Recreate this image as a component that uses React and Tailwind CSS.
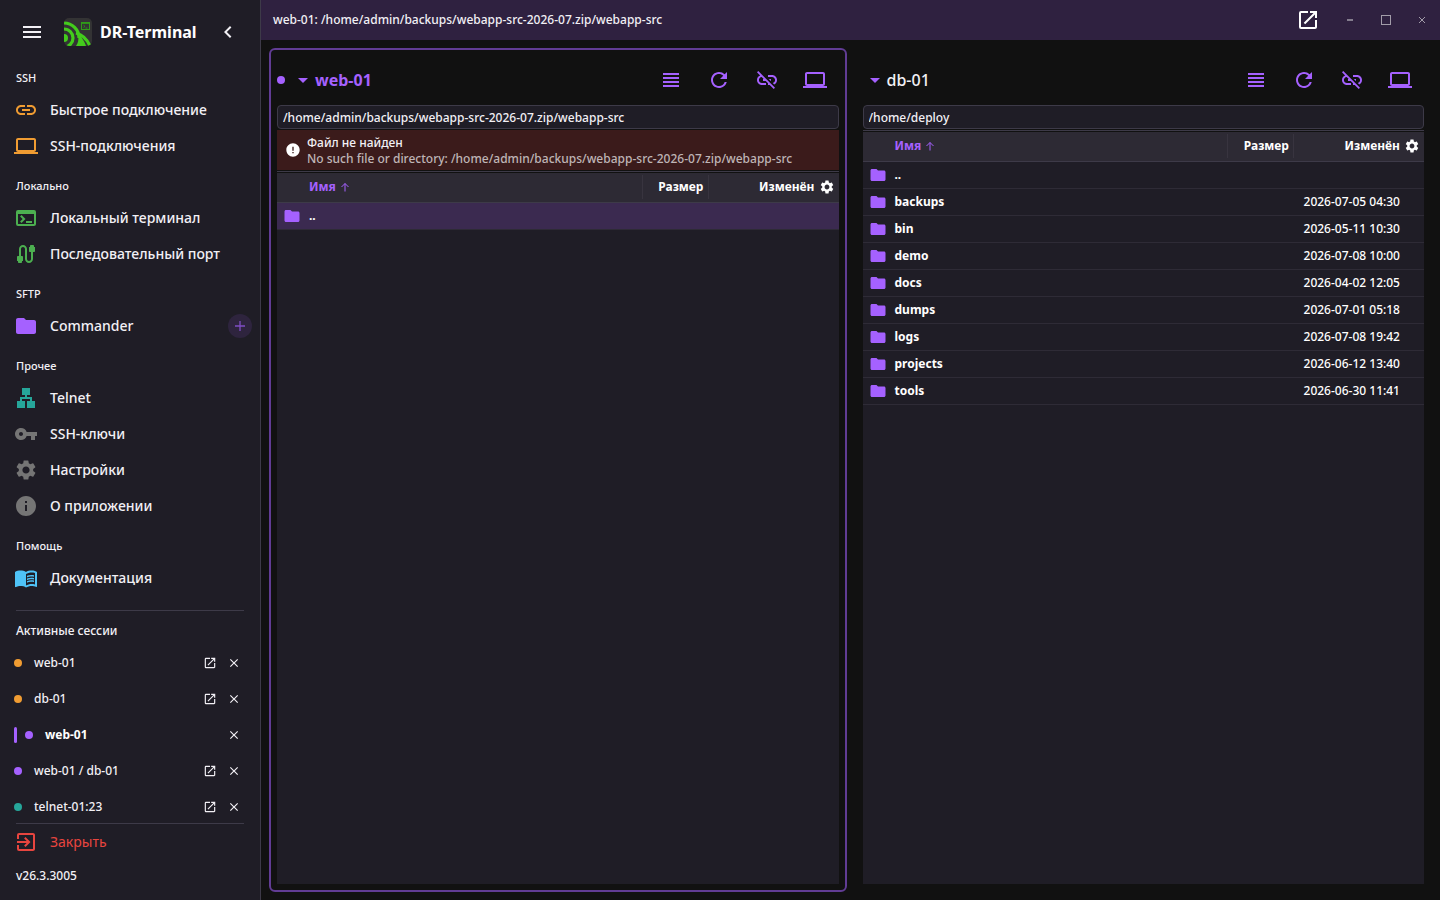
import {
  MdArrowDropDown,
  MdCable,
  MdChevronLeft,
  MdClose,
  MdComputer,
  MdError,
  MdExitToApp,
  MdFolder,
  MdInfo,
  MdLan,
  MdLink,
  MdLinkOff,
  MdMenu,
  MdMenuBook,
  MdOpenInNew,
  MdRefresh,
  MdSettings,
  MdTerminal,
  MdViewHeadline,
  MdVpnKey,
} from "react-icons/md";

const ARCHIVE_PATH = "/home/admin/backups/webapp-src-2026-07.zip/webapp-src";

const groups = [
  {
    title: "SSH",
    items: [
      { label: "Быстрое подключение", icon: MdLink, color: "text-[#f09c32]" },
      { label: "SSH-подключения", icon: MdComputer, color: "text-[#f09c32]" },
    ],
  },
  {
    title: "Локально",
    items: [
      { label: "Локальный терминал", icon: MdTerminal, color: "text-[#4caf50]" },
      { label: "Последовательный порт", icon: MdCable, color: "text-[#4caf50]" },
    ],
  },
  {
    title: "SFTP",
    items: [
      { label: "Commander", icon: MdFolder, color: "text-[#a561ff]", add: true },
    ],
  },
  {
    title: "Прочее",
    items: [
      { label: "Telnet", icon: MdLan, color: "text-[#26a69a]" },
      { label: "SSH-ключи", icon: MdVpnKey, color: "text-[#757575]" },
      { label: "Настройки", icon: MdSettings, color: "text-[#757575]" },
      { label: "О приложении", icon: MdInfo, color: "text-[#757575]" },
    ],
  },
  {
    title: "Помощь",
    items: [
      { label: "Документация", icon: MdMenuBook, color: "text-[#4fc3f7]" },
    ],
  },
];

const sessions = [
  { name: "web-01", dot: "bg-[#f09c32]" },
  { name: "db-01", dot: "bg-[#f09c32]" },
  { name: "web-01", dot: "bg-[#a561ff]", active: true },
  { name: "web-01 / db-01", dot: "bg-[#a561ff]" },
  { name: "telnet-01:23", dot: "bg-[#26a69a]" },
];

const deployFiles = [
  { name: ".." },
  { name: "backups", modified: "2026-07-05 04:30" },
  { name: "bin", modified: "2026-05-11 10:30" },
  { name: "demo", modified: "2026-07-08 10:00" },
  { name: "docs", modified: "2026-04-02 12:05" },
  { name: "dumps", modified: "2026-07-01 05:18" },
  { name: "logs", modified: "2026-07-08 19:42" },
  { name: "projects", modified: "2026-06-12 13:40" },
  { name: "tools", modified: "2026-06-30 11:41" },
];

function Logo() {
  return (
    <svg viewBox="0 0 28 28" className="size-7 shrink-0" aria-hidden="true">
      <defs>
        <clipPath id="logo-clip">
          <rect width="28" height="28" rx="5" />
        </clipPath>
      </defs>
      <g clipPath="url(#logo-clip)">
        <rect width="28" height="28" fill="#333334" />
        <g fill="none" stroke="#43cc1c" strokeWidth="3.2">
          <path d="M0 5A15 15 0 0 1 15 20" />
          <circle cx="0" cy="20" r="9" />
          <path d="M12 15Q21.500 17.500 26 28" />
        </g>
        <circle cx="0" cy="20" r="4" fill="#43cc1c" />
        <path d="M14 17l3 .5c.5 3 4 6 5 10.500H12c2-3 3-6 2-11z" fill="#43cc1c" />
        <rect x="17.500" y="4.500" width="8" height="7" fill="none" stroke="#2f9a18" />
        <path d="M17.500 5.500h8M19.500 7.200L21 8.400 19.500 9.600M21.500 10h2" fill="none" stroke="#2f9a18" strokeWidth=".9" />
      </g>
    </svg>
  );
}

function Sidebar() {
  return (
    <aside className="flex w-[261px] shrink-0 flex-col overflow-hidden border-r border-[#3d3a48] bg-[#1f1d26]">
      <div className="flex h-16 shrink-0 items-center px-5">
        <button aria-label="Меню">
          <MdMenu className="size-6" />
        </button>
        <div className="ml-5 flex flex-1 items-center gap-2">
          <Logo />
          <h1 className="text-base font-bold text-white">DR-Terminal</h1>
        </div>
        <button aria-label="Свернуть">
          <MdChevronLeft className="size-6" />
        </button>
      </div>

      <nav className="flex shrink-0 flex-col gap-2">
        {groups.map((group) => (
          <section key={group.title}>
            <h2 className="flex h-7 items-center px-4 text-[11px] font-medium">{group.title}</h2>
            {group.items.map((item) => (
              <div key={item.label} className="flex h-9 items-center pr-2 pl-3.5">
                <a href="#" className="flex flex-1 items-center gap-3 text-sm font-medium">
                  <item.icon className={`size-6 shrink-0 ${item.color}`} />
                  {item.label}
                </a>
                {item.add && (
                  <button
                    aria-label="Добавить"
                    className="flex size-6 items-center justify-center rounded-full bg-[#2e243e] text-[#7f4dc4]"
                  >
                    <svg viewBox="0 0 16 16" className="size-4" stroke="currentColor" strokeWidth="1.3">
                      <path d="M8 3v10M3 8h10" />
                    </svg>
                  </button>
                )}
              </div>
            ))}
          </section>
        ))}
      </nav>

      <hr className="mx-4 mt-3.5 border-[#3d3a48]" />
      <h2 className="shrink-0 px-4 pt-3 pb-1.5 text-xs/4 font-medium">Активные сессии</h2>
      <ul className="min-h-0 flex-1 overflow-hidden">
        {sessions.map((session, i) => (
          <li key={i} className="flex h-9 items-center px-3.5">
            {session.active && <span className="mr-2 h-4 w-[3px] rounded-sm bg-[#a561ff]" />}
            <span className={`mr-3 size-2 rounded-full ${session.dot}`} />
            <a
              href="#"
              className={`flex-1 text-xs ${session.active ? "font-bold text-white" : "font-medium"}`}
            >
              {session.name}
            </a>
            {!session.active && (
              <button aria-label="Открыть в новом окне" className="flex size-6 items-center justify-center">
                <MdOpenInNew className="size-3.5" />
              </button>
            )}
            <button aria-label="Закрыть сессию" className="flex size-6 items-center justify-center">
              <MdClose className="size-3.5" />
            </button>
          </li>
        ))}
      </ul>

      <hr className="mx-4 border-[#3d3a48]" />
      <button className="flex h-9 shrink-0 items-center gap-3 px-3.5 text-sm text-[#e8453f]">
        <MdExitToApp className="size-6" />
        Закрыть
      </button>
      <p className="h-10 shrink-0 px-4 pt-2 text-xs/4 font-medium">v26.3.3005</p>
    </aside>
  );
}

function TitleBar() {
  return (
    <header className="flex h-10 shrink-0 items-center bg-[#2f2140] pl-3">
      <h2 className="flex-1 text-xs font-medium">web-01: {ARCHIVE_PATH}</h2>
      <button aria-label="Открыть в новом окне" className="mr-3 text-white">
        <MdOpenInNew className="size-6" />
      </button>
      <div className="flex text-[#a29ca9]">
        <button aria-label="Свернуть окно" className="flex w-9 justify-center">
          <svg viewBox="0 0 12 12" className="size-3" stroke="currentColor">
            <path d="M3 6h6" strokeWidth="1.500" />
          </svg>
        </button>
        <button aria-label="Развернуть окно" className="flex w-9 justify-center">
          <svg viewBox="0 0 12 12" className="size-3" fill="none" stroke="currentColor">
            <rect x="1.500" y="1.500" width="9" height="9" />
          </svg>
        </button>
        <button aria-label="Закрыть окно" className="flex w-9 justify-center">
          <svg viewBox="0 0 12 12" className="size-3" stroke="currentColor">
            <path d="M3 3l6 6M9 3l-6 6" />
          </svg>
        </button>
      </div>
    </header>
  );
}

function FileTable({ files, selected }) {
  return (
    <div className="mt-px flex flex-1 flex-col border-t border-[#3d3a48]">
      <div className="mt-px flex-1 bg-[#1f1d26]">
        <table className="w-full table-fixed border-collapse text-white">
          <colgroup>
            <col />
            <col className="w-[67px]" />
            <col className="w-[130px]" />
          </colgroup>
          <thead>
            <tr className="h-[29px] border-b border-[#3d3a48] bg-[#2d2a34] text-xs">
              <th className="p-0 pl-8 text-left font-bold text-[#a561ff]">
                <span className="flex items-center gap-1">
                  Имя
                  <svg viewBox="0 0 10 10" className="size-2.5" fill="none" stroke="currentColor">
                    <path d="M5 9.500V1.500M1.500 5L5 1.500 8.500 5" />
                  </svg>
                </span>
              </th>
              <th className="p-0 font-bold">
                <div className="border-x border-[#38343f] py-1 pr-1 text-right">Размер</div>
              </th>
              <th className="p-0 pr-1 font-bold">
                <div className="flex items-center justify-end gap-1">
                  Изменён
                  <button aria-label="Колонки">
                    <MdSettings className="size-4" />
                  </button>
                </div>
              </th>
            </tr>
          </thead>
          <tbody>
            {files.map((file) => (
              <tr
                key={file.name}
                className={`h-[27px] border-b border-[#2e2b36] ${file.name === selected ? "bg-[#3b2a50]" : ""}`}
              >
                <td className="p-0 pl-1.5 text-xs font-bold">
                  <span className="flex items-center gap-2">
                    <MdFolder className="size-[18px] text-[#a561ff]" />
                    {file.name}
                  </span>
                </td>
                <td />
                <td className="p-0 pr-6 text-right text-xs font-medium">{file.modified}</td>
              </tr>
            ))}
          </tbody>
        </table>
      </div>
    </div>
  );
}

function Panel({ host, path, error, files, selected, active }) {
  return (
    <section
      className={`flex min-w-0 flex-1 flex-col rounded-md border-2 p-1.5 ${
        active ? "border-[#613c94]" : "border-transparent"
      }`}
    >
      <div className="flex h-12 shrink-0 items-center text-[#a561ff]">
        {active && <span className="mr-1.5 size-2 rounded-full bg-[#a561ff]" />}
        <button className="flex items-center">
          <MdArrowDropDown className="size-6" />
          <span className={`text-base ${active ? "font-bold" : "font-medium text-[#f2f0f5]"}`}>{host}</span>
        </button>
        <div className="ml-auto flex">
          <button aria-label="Список" className="flex w-12 justify-center">
            <MdViewHeadline className="size-6" />
          </button>
          <button aria-label="Обновить" className="flex w-12 justify-center">
            <MdRefresh className="size-6" />
          </button>
          <button aria-label="Отключить" className="flex w-12 justify-center">
            <MdLinkOff className="size-6" />
          </button>
          <button aria-label="Локальный компьютер" className="flex w-12 justify-center">
            <MdComputer className="size-6" />
          </button>
        </div>
      </div>
      <input
        aria-label="Путь"
        defaultValue={path}
        className="mt-px h-6 w-full shrink-0 rounded border border-[#3d3a48] bg-[#1f1d26] px-[5px] text-xs font-medium outline-none"
      />
      {error && (
        <div role="alert" className="mt-px flex h-10 shrink-0 items-center gap-1.5 bg-[#3b1b1b] px-2 text-xs/4 font-medium">
          <MdError className="size-4 shrink-0 text-white" />
          <div className="pt-0.5">
            <p>{error}</p>
            <p className="text-[#bfb5b6]">No such file or directory: {path}</p>
          </div>
        </div>
      )}
      <FileTable files={files} selected={selected} />
    </section>
  );
}

export default function App() {
  return (
    <div className="flex h-screen overflow-hidden bg-[#111111] font-['Noto_Sans',sans-serif] text-[#f2f0f5]">
      <Sidebar />
      <div className="flex min-w-0 flex-1 flex-col">
        <TitleBar />
        <main className="flex min-h-0 flex-1 gap-2 p-2">
          <Panel
            host="web-01"
            path={ARCHIVE_PATH}
            error="Файл не найден"
            files={[{ name: ".." }]}
            selected=".."
            active
          />
          <Panel host="db-01" path="/home/deploy" files={deployFiles} />
        </main>
      </div>
    </div>
  );
}
